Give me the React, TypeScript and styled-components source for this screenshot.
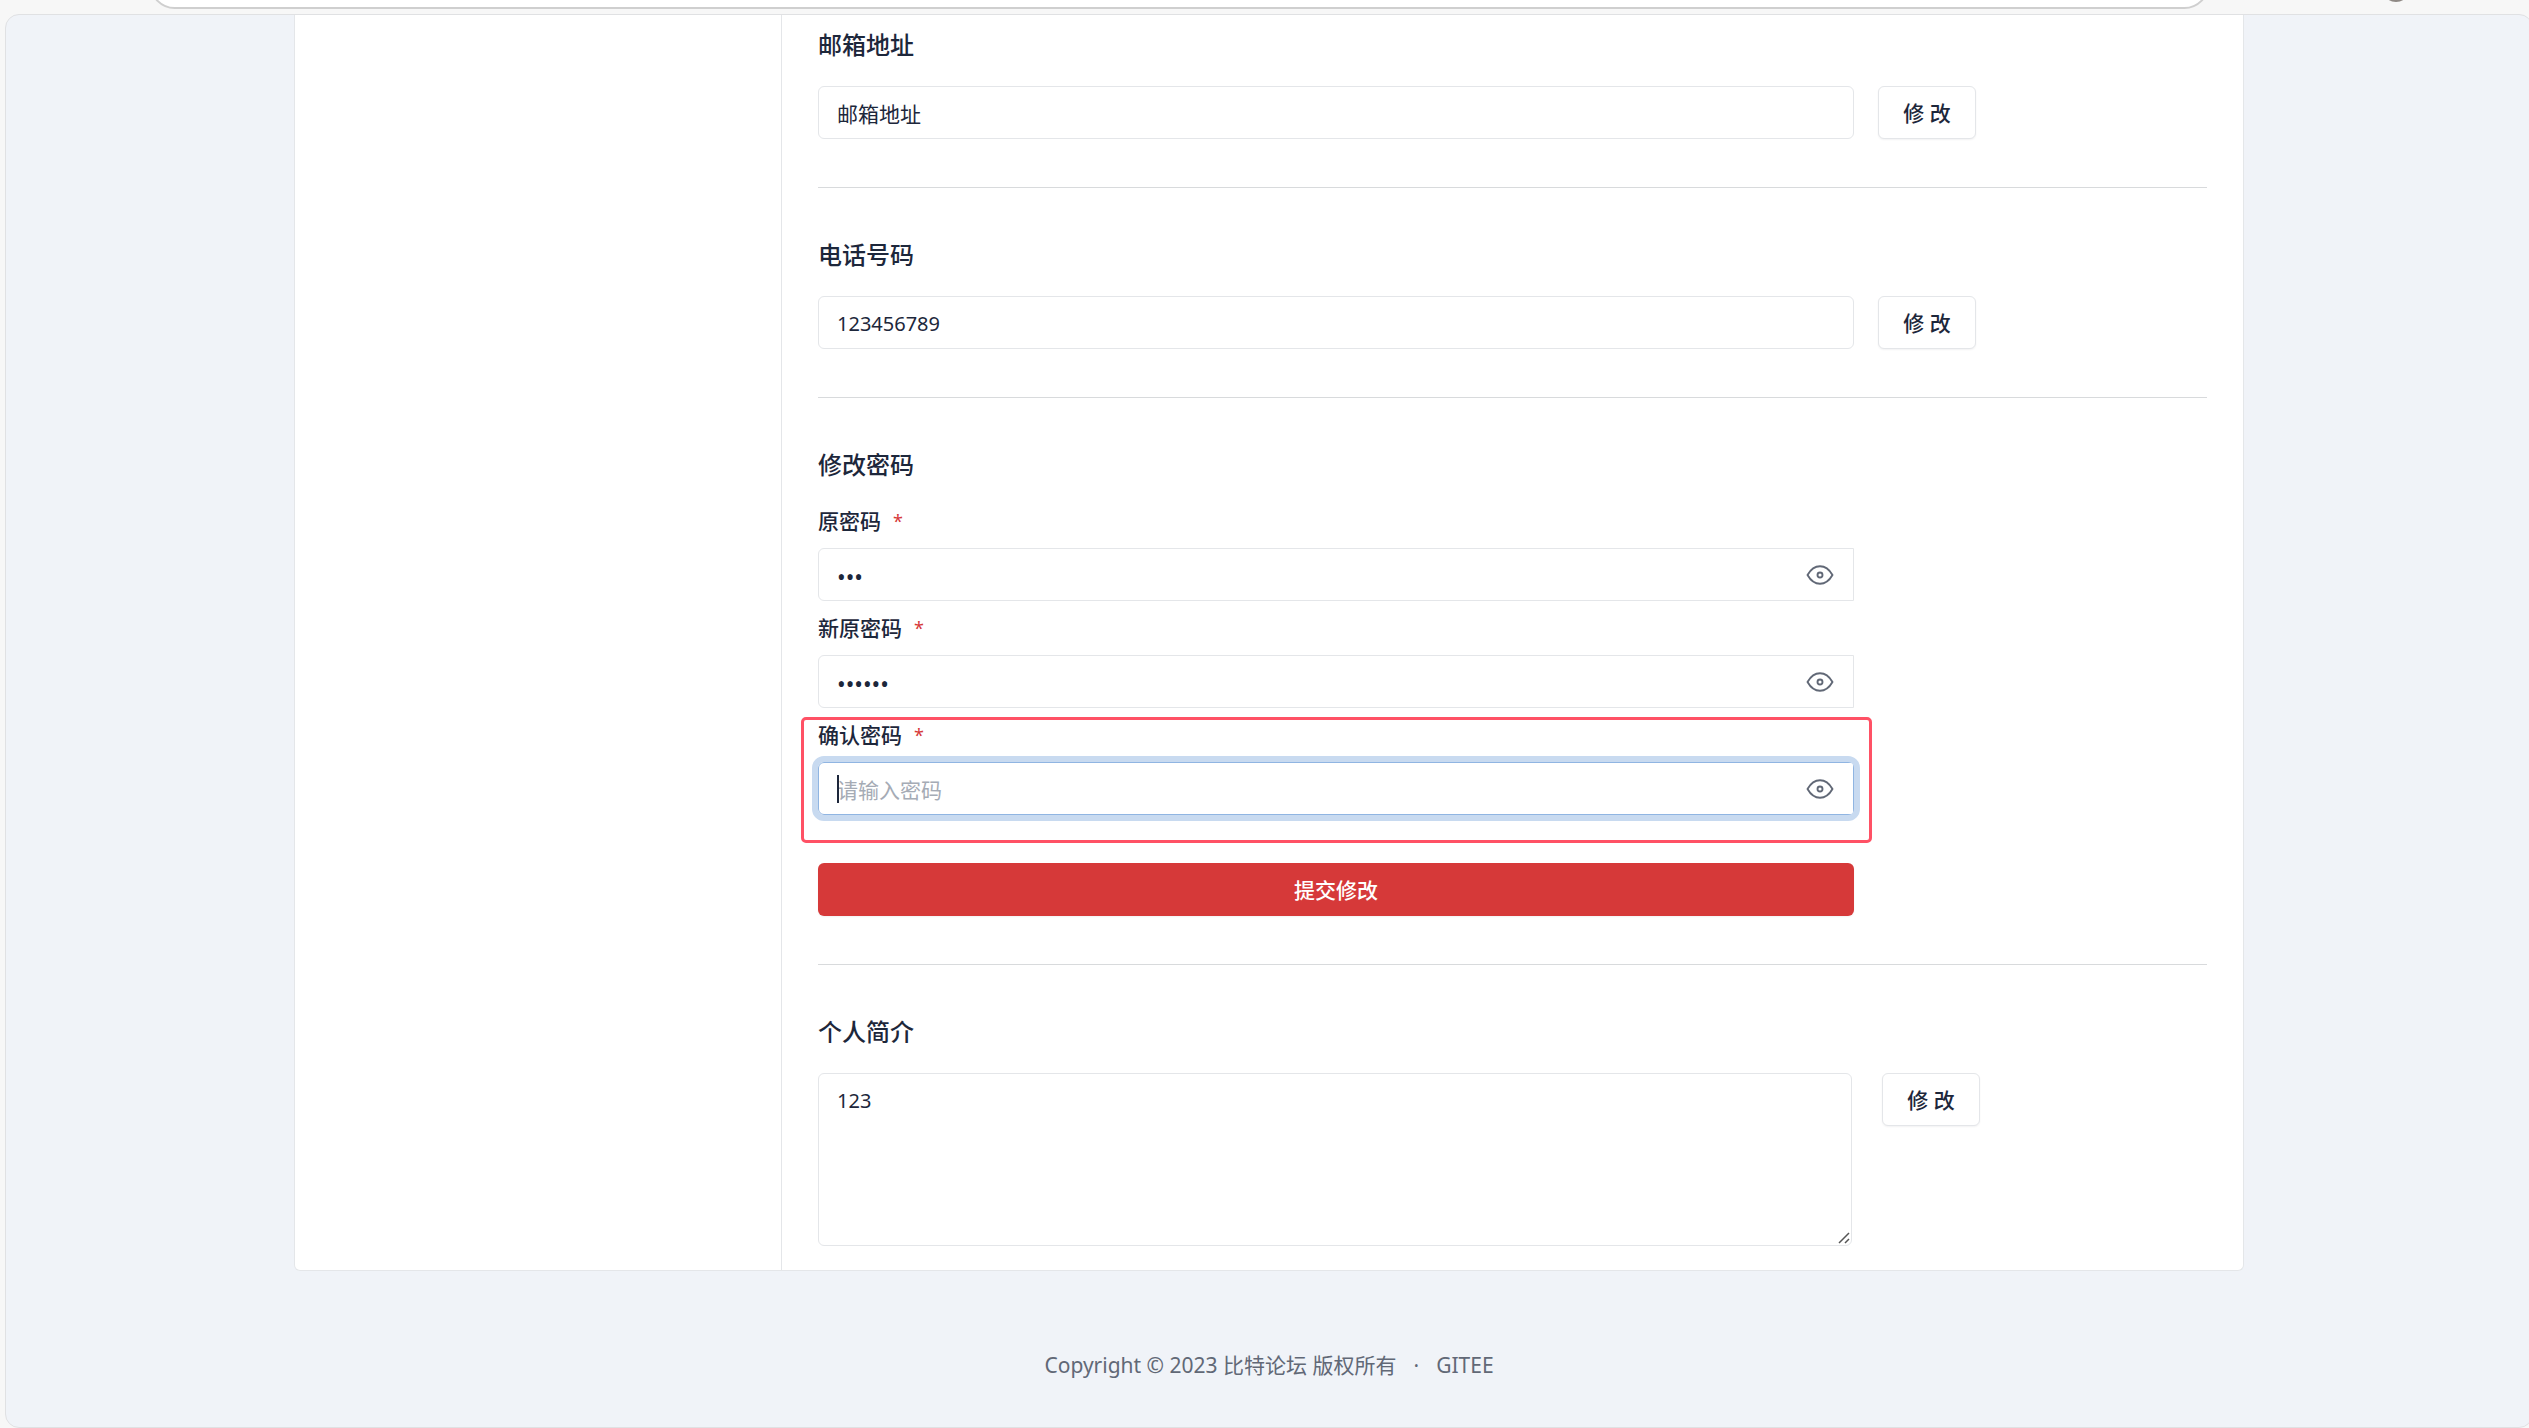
import React, { useState } from 'react';
import styled, { createGlobalStyle, css } from 'styled-components';

const GlobalStyle = createGlobalStyle`
  *, *::before, *::after { box-sizing: border-box; }
  body {
    margin: 0;
    background: #f7f7f7;
    color: #1d273b;
    font-family: "Noto Sans", "Noto Sans CJK SC", sans-serif;
    font-size: 21px;
    line-height: 30px;
  }
  button, input, textarea { font: inherit; color: inherit; }
`;

const Window = styled.div`
  display: flex;
  flex-direction: column;
  min-height: 100vh;
  overflow: hidden;
`;

const BrowserBar = styled.header`
  position: relative;
  flex: none;
  height: 14px;
  padding: 0 320px 0 150px;
  overflow: hidden;
`;

const AddressBar = styled.div`
  height: 49px;
  margin-top: -40px;
  background: #fff;
  border: 2px solid #cfcfcf;
  border-radius: 25px;
`;

const Avatar = styled.span`
  position: absolute;
  top: -26px;
  right: 119px;
  width: 28px;
  height: 28px;
  border-radius: 50%;
  background: #8f8985;
`;

const Viewport = styled.div`
  flex: 1;
  display: flex;
  flex-direction: column;
  margin: 0 -4px 0 5px;
  padding: 0 12px;
  background: #f0f3f8;
  border: 1px solid #e0e1e3;
  border-radius: 14px;
`;

const Card = styled.main`
  display: grid;
  grid-template-columns: 1fr 3fr;
  width: 100%;
  max-width: 1950px;
  margin: 0 auto;
  background: #fff;
  border: 1px solid #e4e6e9;
  border-top: 0;
  border-radius: 0 0 6px 6px;
`;

const Sidebar = styled.aside`
  border-right: 1px solid #e4e6e9;
`;

const Content = styled.div`
  padding: 11px 36px 24px;
`;

const Title = styled.h3`
  margin: 0;
  padding: 1px 0 23px;
  font-size: 24px;
  line-height: 36px;
  font-weight: 500;
`;

const Divider = styled.hr`
  height: 1px;
  margin: 48px 0;
  border: 0;
  background: #d8dadc;
`;

const Row = styled.div<{ $gap?: number }>`
  display: flex;
  align-items: flex-start;
  gap: ${(p) => p.$gap ?? 24}px;
`;

const fieldBox = css`
  display: block;
  background: #fff;
  border: 1px solid #e4e6e9;
  border-radius: 6px;
  outline: none;
`;

const TextField = styled.input<{ $latin?: boolean }>`
  ${fieldBox}
  flex: 0 1 1036px;
  min-width: 0;
  height: 53px;
  padding: ${(p) => (p.$latin ? 2 : 0)}px 18px 0;
  font-size: ${(p) => (p.$latin ? 20 : 21)}px;
`;

const BioBox = styled.div`
  position: relative;
  flex: 0 1 1034px;
  min-width: 0;
`;

const Bio = styled.textarea`
  ${fieldBox}
  width: 100%;
  height: 173px;
  padding: 12px 18px;
  font-size: 20px;
  resize: vertical;
  &::-webkit-resizer {
    background: transparent;
  }
`;

const Grip = styled.svg`
  position: absolute;
  right: 2px;
  bottom: 2px;
  pointer-events: none;
`;

const EditButton = styled.button`
  flex: none;
  width: 98px;
  height: 53px;
  padding: 0;
  background: #fff;
  border: 1px solid #e4e6e9;
  border-radius: 6px;
  box-shadow: 0 1px 2px rgba(29, 39, 59, 0.06);
  font-weight: 500;
  cursor: pointer;
`;

const PasswordForm = styled.form`
  display: flex;
  flex-direction: column;
  gap: 12px;
  max-width: 1036px;
`;

const PasswordField = styled.div`
  position: relative;
`;

const FieldLabel = styled.label`
  display: flex;
  gap: 12px;
  margin-bottom: 11px;
  line-height: 31px;
  font-weight: 500;
`;

const Required = styled.span`
  color: #d63939;
  font-size: 18px;
  font-weight: 400;
`;

const InputGroup = styled.div<{ $focused?: boolean }>`
  position: relative;
  display: flex;
  align-items: center;
  height: 53px;
  background: #fff;
  border: 1px solid ${(p) => (p.$focused ? '#90b5e2' : '#e4e6e9')};
  border-radius: 6px 0 0 6px;
  ${(p) =>
    p.$focused &&
    css`
      &::before {
        content: '';
        position: absolute;
        inset: -7px;
        border: 6px solid #c8daf0;
        border-radius: 12px;
        pointer-events: none;
      }
    `}
`;

const PasswordInput = styled.input<{ $masked: boolean }>`
  flex: 1;
  min-width: 0;
  height: 100%;
  padding: 2px 18px 0;
  background: transparent;
  border: 0;
  outline: none;
  ${(p) =>
    p.$masked &&
    css`
      padding-top: 4px;
      font-size: 23px;
    `}
  &::placeholder {
    color: #a5abb5;
    opacity: 1;
  }
`;

const Caret = styled.span`
  position: absolute;
  left: 18px;
  top: 12px;
  width: 2px;
  height: 28px;
  background: #1d273b;
`;

const ToggleButton = styled.button`
  display: flex;
  padding: 8px;
  margin-right: 10px;
  background: none;
  border: 0;
  color: #616876;
  cursor: pointer;
`;

const Highlight = styled.div`
  position: absolute;
  inset: -3px -18px -28px -17px;
  border: 3px solid #ff5165;
  border-radius: 5px;
  pointer-events: none;
`;

const SubmitButton = styled.button`
  height: 53px;
  margin-top: 36px;
  padding: 0;
  background: #d63939;
  border: 0;
  border-radius: 6px;
  box-shadow: 0 1px 2px rgba(29, 39, 59, 0.06);
  color: #fff;
  font-weight: 500;
  cursor: pointer;
`;

const Footer = styled.footer`
  display: flex;
  justify-content: center;
  gap: 17px;
  padding: 79px 0 47px;
  color: #616876;
`;

const FooterLink = styled.a`
  color: inherit;
  text-decoration: none;
`;

function EyeIcon() {
  return (
    <svg width="30" height="30" viewBox="0 0 24 24" fill="none" stroke="currentColor" strokeWidth="1.5" strokeLinecap="round" strokeLinejoin="round" aria-hidden="true">
      <circle cx="12" cy="12" r="2" />
      <path d="M22 12c-2.667 4.667 -6 7 -10 7s-7.333 -2.333 -10 -7c2.667 -4.667 6 -7 10 -7s7.333 2.333 10 7" />
    </svg>
  );
}

interface PasswordProps {
  id: string;
  label: string;
  initial?: string;
  active?: boolean;
}

function Password({ id, label, initial = '', active }: PasswordProps) {
  const [value, setValue] = useState(initial);
  const [visible, setVisible] = useState(false);
  return (
    <PasswordField>
      <FieldLabel htmlFor={id}>
        {label}
        <Required>*</Required>
      </FieldLabel>
      <InputGroup $focused={active}>
        <PasswordInput
          id={id}
          type={visible ? 'text' : 'password'}
          $masked={!visible && value !== ''}
          autoComplete="off"
          placeholder="请输入密码"
          value={value}
          onChange={(e) => setValue(e.target.value)}
        />
        {active && value === '' && <Caret />}
        <ToggleButton type="button" aria-label="显示密码" onClick={() => setVisible(!visible)}>
          <EyeIcon />
        </ToggleButton>
      </InputGroup>
      {active && <Highlight />}
    </PasswordField>
  );
}

export default function App() {
  return (
    <Window>
      <GlobalStyle />
      <BrowserBar>
        <AddressBar />
        <Avatar />
      </BrowserBar>
      <Viewport>
        <Card>
          <Sidebar />
          <Content>
            <Title>
              <label htmlFor="email">邮箱地址</label>
            </Title>
            <Row>
              <TextField id="email" defaultValue="邮箱地址" />
              <EditButton type="button">修 改</EditButton>
            </Row>
            <Divider />
            <Title>
              <label htmlFor="phone">电话号码</label>
            </Title>
            <Row>
              <TextField id="phone" $latin defaultValue="123456789" />
              <EditButton type="button">修 改</EditButton>
            </Row>
            <Divider />
            <Title>修改密码</Title>
            <PasswordForm onSubmit={(e) => e.preventDefault()}>
              <Password id="old-password" label="原密码" initial="123" />
              <Password id="new-password" label="新原密码" initial="123456" />
              <Password id="confirm-password" label="确认密码" active />
              <SubmitButton type="submit">提交修改</SubmitButton>
            </PasswordForm>
            <Divider />
            <Title>
              <label htmlFor="bio">个人简介</label>
            </Title>
            <Row $gap={30}>
              <BioBox>
                <Bio id="bio" defaultValue="123" />
                <Grip width="12" height="12" viewBox="0 0 12 12" fill="none" stroke="#555" strokeWidth="1.5" aria-hidden="true">
                  <path d="M1 11L11 1M7 11L11 7" />
                </Grip>
              </BioBox>
              <EditButton type="button">修 改</EditButton>
            </Row>
          </Content>
        </Card>
        <Footer>
          <span>Copyright © 2023 比特论坛 版权所有</span>
          <span>·</span>
          <FooterLink href="#gitee">GITEE</FooterLink>
        </Footer>
      </Viewport>
    </Window>
  );
}
